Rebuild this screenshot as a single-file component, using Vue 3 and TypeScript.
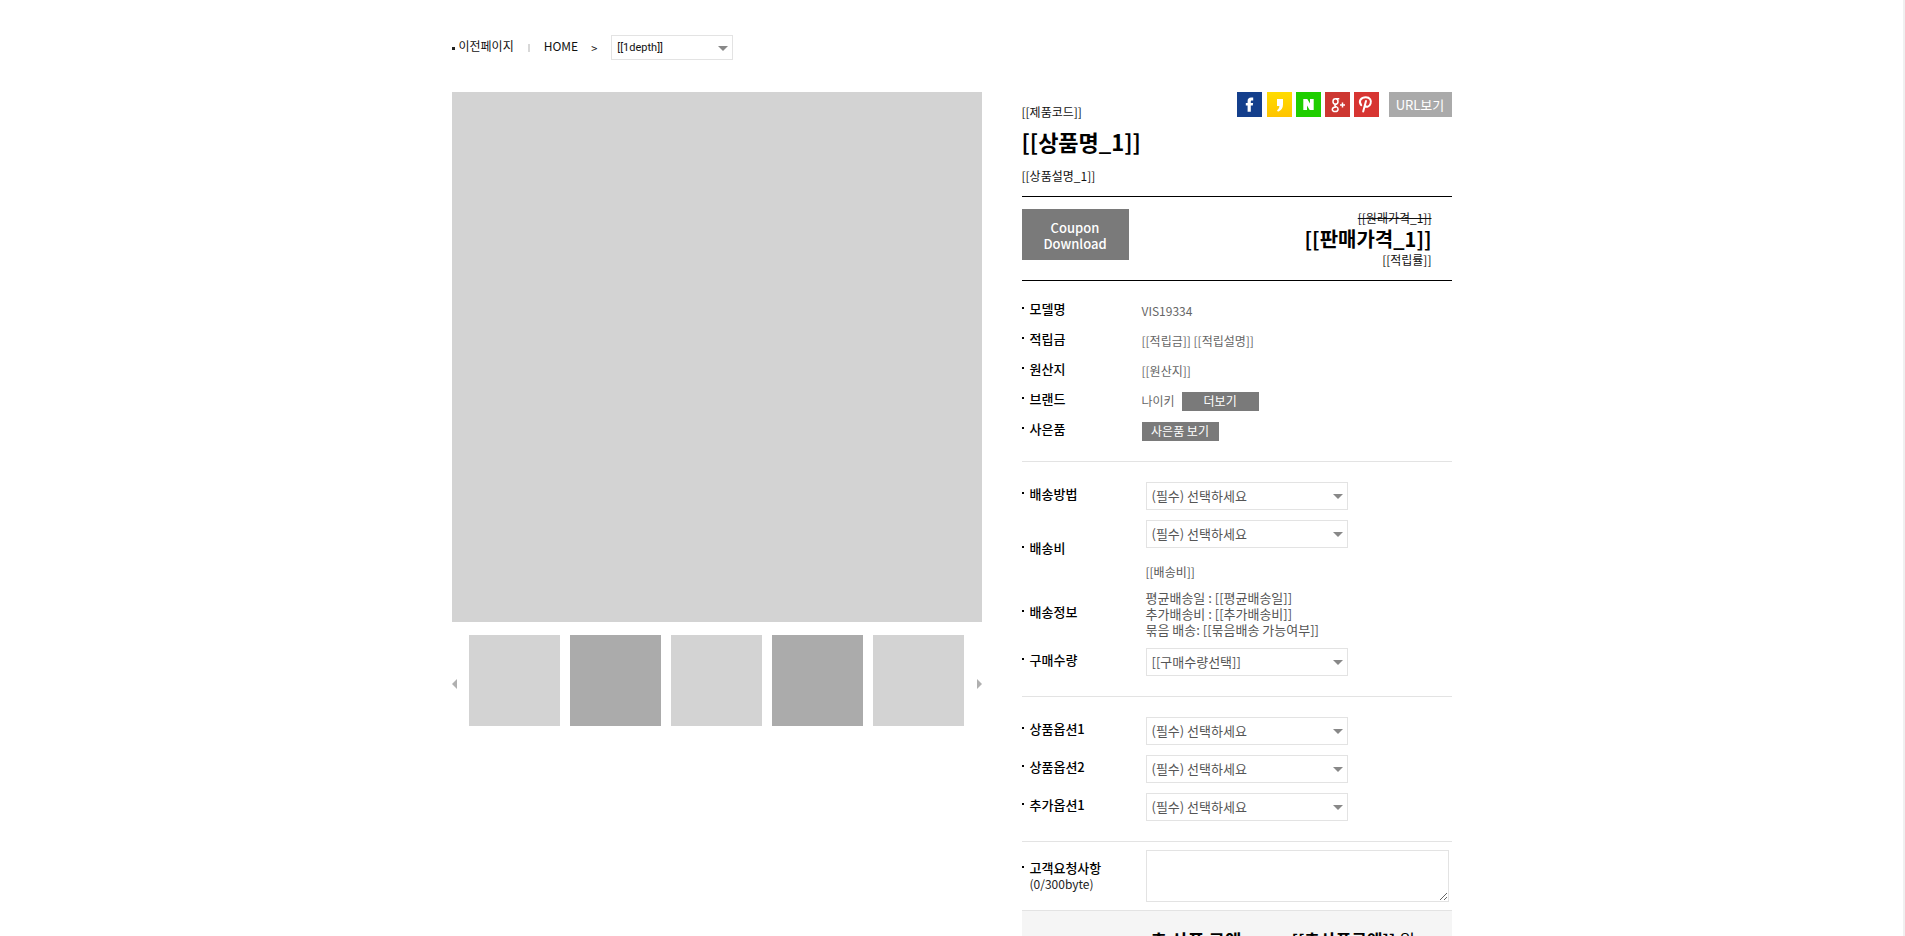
<script setup lang="ts">
import { ref } from 'vue'

interface Field {
  id: string
  label: string
  option: string
}

const infoRows = [
  { label: '모델명', value: 'VIS19334' },
  { label: '적립금', value: '[[적립금]] [[적립설명]]' },
  { label: '원산지', value: '[[원산지]]' },
  { label: '브랜드', value: '나이키', action: '더보기' },
  { label: '사은품', value: '', action: '사은품 보기' },
]

const deliveryLines = [
  '평균배송일 : [[평균배송일]]',
  '추가배송비 : [[추가배송비]]',
  '묶음 배송: [[묶음배송 가능여부]]',
]

const optionFields: Field[] = [
  { id: 'option-1', label: '상품옵션1', option: '(필수) 선택하세요' },
  { id: 'option-2', label: '상품옵션2', option: '(필수) 선택하세요' },
  { id: 'extra-1', label: '추가옵션1', option: '(필수) 선택하세요' },
]

const thumbs = [false, true, false, true, false]
const request = ref('')
</script>

<template>
  <div class="page">
    <main class="container">
      <nav class="crumbs">
        <a class="back" href="#">이전페이지</a>
        <span class="bar"></span>
        <a class="home" href="#">HOME</a>
        <span class="arrow">&gt;</span>
        <span class="select select-depth">
          <select aria-label="1depth"><option>[[1depth]]</option></select>
          <svg viewBox="0 0 10 5" width="10" height="5"><path d="M0 0h10L5 5z" /></svg>
        </span>
      </nav>

      <div class="product">
        <section class="gallery">
          <div class="photo"></div>
          <div class="strip">
            <button class="nav" type="button" aria-label="이전">
              <svg viewBox="0 0 5 10" width="5" height="10"><path d="M5 0v10L0 5z" /></svg>
            </button>
            <ul class="thumbs">
              <li v-for="(dark, i) in thumbs" :key="i" :class="{ dark }"></li>
            </ul>
            <button class="nav" type="button" aria-label="다음">
              <svg viewBox="0 0 5 10" width="5" height="10"><path d="M0 0v10l5-5z" /></svg>
            </button>
          </div>
        </section>

        <section class="detail">
          <header class="head">
            <div class="names">
              <p class="line">[[제품코드]]</p>
              <h1>[[상품명_1]]</h1>
              <p class="line">[[상품설명_1]]</p>
            </div>
            <div class="share">
              <a class="sns facebook" href="#" aria-label="Facebook">
                <svg viewBox="0 0 25 25"><path d="M16.200 5.500v2.900h-1.300c-.8 0-1.100.4-1.100 1.100v1.500h2.300l-.3 2.600h-2v6.100h-3.200v-6.100H8.800V11h1.800V9c0-2.300 1.300-3.600 3.500-3.600z" /></svg>
              </a>
              <a class="sns kakao" href="#" aria-label="KakaoStory">
                <svg viewBox="0 0 25 25"><path d="M10 7h6v5.500c0 3.600-1.700 6-5 7.200l-1-1.400c1.500-.9 2.300-2.300 2.400-4.300H10z" /></svg>
              </a>
              <a class="sns naver" href="#" aria-label="Naver">
                <svg viewBox="0 0 25 25"><path d="M7.300 7h4l2.700 4.500V7h3.700v11h-4L11 13.500V18H7.300z" /></svg>
              </a>
              <a class="sns google" href="#" aria-label="Google+">
                <svg class="stroked" viewBox="0 0 25 25">
                  <ellipse cx="10.500" cy="9.500" rx="2.500" ry="2.700" />
                  <path d="M11 6.800h3.300M11.500 12c-2.500 1-2 2 0 2.900 2.300 1 2.300 4.600-1.300 4.600-4 0-4-4.300.8-4.500M17.500 10.500v5M15 13h5" />
                </svg>
              </a>
              <a class="sns pinterest" href="#" aria-label="Pinterest">
                <svg class="stroked bold" viewBox="0 0 25 25">
                  <path d="M7.200 13.200C3.900 9 7.300 5.300 11.800 5.300c4.200 0 5.800 3.300 4.800 6.200-1.200 4-4.900 4.100-5.600 1.800M12 9l-2.800 10.500" />
                </svg>
              </a>
              <button class="url" type="button">URL보기</button>
            </div>
          </header>

          <div class="price">
            <button class="coupon" type="button">Coupon<br />Download</button>
            <div class="amounts">
              <del>[[원래가격_1]]</del>
              <strong>[[판매가격_1]]</strong>
              <span>[[적립률]]</span>
            </div>
          </div>

          <dl class="info">
            <div v-for="row in infoRows" :key="row.label" class="info-row">
              <dt class="label">{{ row.label }}</dt>
              <dd>
                <span v-if="row.value">{{ row.value }}</span>
                <button v-if="row.action" class="more" type="button">{{ row.action }}</button>
              </dd>
            </div>
          </dl>

          <div class="group">
            <div class="row">
              <label class="label" for="ship-method">배송방법</label>
              <span class="select">
                <select id="ship-method"><option>(필수) 선택하세요</option></select>
                <svg viewBox="0 0 10 5" width="10" height="5"><path d="M0 0h10L5 5z" /></svg>
              </span>
            </div>
            <div class="row">
              <label class="label" for="ship-fee">배송비</label>
              <div class="fee">
                <span class="select">
                  <select id="ship-fee"><option>(필수) 선택하세요</option></select>
                  <svg viewBox="0 0 10 5" width="10" height="5"><path d="M0 0h10L5 5z" /></svg>
                </span>
                <p class="line">[[배송비]]</p>
              </div>
            </div>
            <div class="row">
              <span class="label">배송정보</span>
              <div class="notes">
                <p v-for="line in deliveryLines" :key="line">{{ line }}</p>
              </div>
            </div>
            <div class="row">
              <label class="label" for="quantity">구매수량</label>
              <span class="select">
                <select id="quantity"><option>[[구매수량선택]]</option></select>
                <svg viewBox="0 0 10 5" width="10" height="5"><path d="M0 0h10L5 5z" /></svg>
              </span>
            </div>
          </div>

          <div class="group">
            <div v-for="field in optionFields" :key="field.id" class="row">
              <label class="label" :for="field.id">{{ field.label }}</label>
              <span class="select">
                <select :id="field.id"><option>{{ field.option }}</option></select>
                <svg viewBox="0 0 10 5" width="10" height="5"><path d="M0 0h10L5 5z" /></svg>
              </span>
            </div>
          </div>

          <div class="group request">
            <div class="row">
              <label class="label" for="request">고객요청사항<small>(0/300byte)</small></label>
              <textarea id="request" v-model="request"></textarea>
            </div>
          </div>

          <div class="total">
            <strong class="total-title">총 상품 금액</strong>
            <span><strong>[[총상품금액]]</strong> 원</span>
          </div>
        </section>
      </div>
    </main>
  </div>
</template>

<style>
body {
  margin: 0;
  background: #fff;
}
</style>

<style scoped>
.page {
  box-sizing: border-box;
  height: 100vh;
  overflow: hidden;
  border-right: 2px solid #f0f0f0;
  color: #111;
  font-family: "Noto Sans CJK KR", "Noto Sans", sans-serif;
  font-size: 12px;
  line-height: 16px;
}
.container {
  max-width: 1000px;
  margin: 0 auto;
  padding-top: 35px;
}
a {
  color: inherit;
  text-decoration: none;
}
button,
select,
textarea {
  box-sizing: border-box;
  margin: 0;
  font: inherit;
}
button {
  padding: 0;
  border: 0;
  color: #fff;
  cursor: pointer;
}
p,
h1,
dl,
dd,
ul {
  margin: 0;
  padding: 0;
}
.crumbs {
  display: flex;
  align-items: center;
  height: 25px;
  margin-bottom: 32px;
}
.back {
  display: flex;
  align-items: center;
  gap: 4px;
}
.back,
.home {
  padding-bottom: 3px;
}
.back::before {
  content: "";
  width: 3px;
  height: 3px;
  margin-top: 4px;
  background: #222;
}
.bar {
  width: 2px;
  height: 8px;
  margin: 0 14px;
  background: #d8d8d8;
}
.arrow {
  margin: 0 14px 0 13px;
  font-size: 11px;
}
.select {
  position: relative;
  display: block;
  width: 202px;
  height: 28px;
}
.select select {
  width: 100%;
  height: 100%;
  padding: 0 20px 0 5px;
  border: 1px solid #e3e3e3;
  border-radius: 0;
  background: #fff;
  color: #555;
  font-size: 13px;
  appearance: none;
}
.select svg {
  position: absolute;
  top: 50%;
  right: 5px;
  margin-top: -2px;
  fill: #888;
  pointer-events: none;
}
.select-depth {
  width: 122px;
  height: 25px;
}
.select-depth select {
  color: #111;
  font-family: Roboto, "Noto Sans CJK KR", sans-serif;
  font-size: 11px;
}
.product {
  display: flex;
  justify-content: space-between;
  align-items: flex-start;
}
.gallery {
  width: 53%;
}
.photo {
  aspect-ratio: 1;
  background: #d3d3d3;
}
.strip {
  display: flex;
  align-items: center;
  justify-content: space-between;
  margin-top: 13px;
}
.nav {
  display: flex;
  padding-top: 6px;
  background: none;
}
.nav svg {
  fill: #b0b0b0;
}
.thumbs {
  display: grid;
  flex: 1;
  grid-template-columns: repeat(5, 1fr);
  gap: 10px;
  margin: 0 13px 0 12px;
  list-style: none;
}
.thumbs li {
  aspect-ratio: 1;
  background: #d3d3d3;
}
.thumbs li.dark {
  background: #ababab;
}
.detail {
  width: 43%;
}
.head {
  display: flex;
  justify-content: space-between;
  align-items: flex-start;
  border-bottom: 1px solid #000;
}
.names {
  padding: 12px 0;
}
h1 {
  margin: 6px 0 12px;
  color: #000;
  font-size: 22px;
  font-weight: 700;
  line-height: 30px;
}
.share {
  display: flex;
  gap: 4px;
}
.sns {
  width: 25px;
  height: 25px;
}
.sns svg {
  display: block;
  width: 25px;
  height: 25px;
  fill: #fff;
}
.sns .stroked {
  fill: none;
  stroke: #fff;
  stroke-width: 1.5;
}
.sns .bold {
  stroke-width: 2;
  stroke-linecap: round;
}
.facebook {
  margin-right: 1px;
  background: #143f8c;
}
.kakao {
  background: linear-gradient(#ffdc00, #ffc400);
}
.naver {
  background: #1fce00;
}
.google {
  background: #cd3731;
}
.pinterest {
  background: #d73532;
}
.url {
  width: 63px;
  height: 25px;
  margin-left: 6px;
  background: #aaa;
  font-size: 13px;
}
.price {
  display: flex;
  justify-content: space-between;
  align-items: flex-start;
  padding: 12px 20px 12px 0;
  border-bottom: 1px solid #000;
}
.coupon {
  width: 107px;
  height: 51px;
  padding-top: 3px;
  background: #7a7a7a;
  font-size: 13px;
  font-weight: 500;
}
.amounts {
  display: flex;
  flex-direction: column;
  align-items: flex-end;
  padding-top: 1px;
}
.amounts strong {
  color: #000;
  font-size: 20px;
  line-height: 26px;
}
.info {
  padding: 15px 0;
}
.info-row {
  display: grid;
  grid-template-columns: 120px 1fr;
  align-items: center;
  height: 30px;
}
.info-row dd {
  display: flex;
  align-items: center;
  gap: 7px;
  color: #666;
}
.label {
  position: relative;
  padding: 0 0 4px 8px;
  color: #000;
  font-size: 13px;
  font-weight: 500;
}
.label::before {
  content: "";
  position: absolute;
  top: 6px;
  left: 0;
  width: 2px;
  height: 2px;
  background: #000;
}
.label small {
  display: block;
  color: #222;
  font-size: 12px;
  font-weight: 400;
}
.more {
  width: 77px;
  height: 19px;
  background: #7a7a7a;
}
.group {
  display: flex;
  flex-direction: column;
  gap: 10px;
  padding: 20px 0;
  border-top: 1px solid #e3e3e3;
}
.row {
  display: grid;
  grid-template-columns: 124px 1fr;
  align-items: center;
  color: #555;
}
.fee {
  display: flex;
  flex-direction: column;
  gap: 16px;
}
.notes {
  font-size: 13px;
}
.request {
  padding: 8px 3px 8px 0;
}
.request .label {
  padding-bottom: 0;
}
.request textarea {
  display: block;
  width: 100%;
  height: 52px;
  border: 1px solid #e3e3e3;
  resize: both;
}
.total {
  display: grid;
  grid-template-columns: 141px 1fr;
  padding: 17px 0 17px 129px;
  border-top: 1px solid #e3e3e3;
  background: #f5f5f5;
  color: #000;
  font-size: 17px;
  line-height: 24px;
}
.total-title {
  font-size: 18px;
}
</style>
